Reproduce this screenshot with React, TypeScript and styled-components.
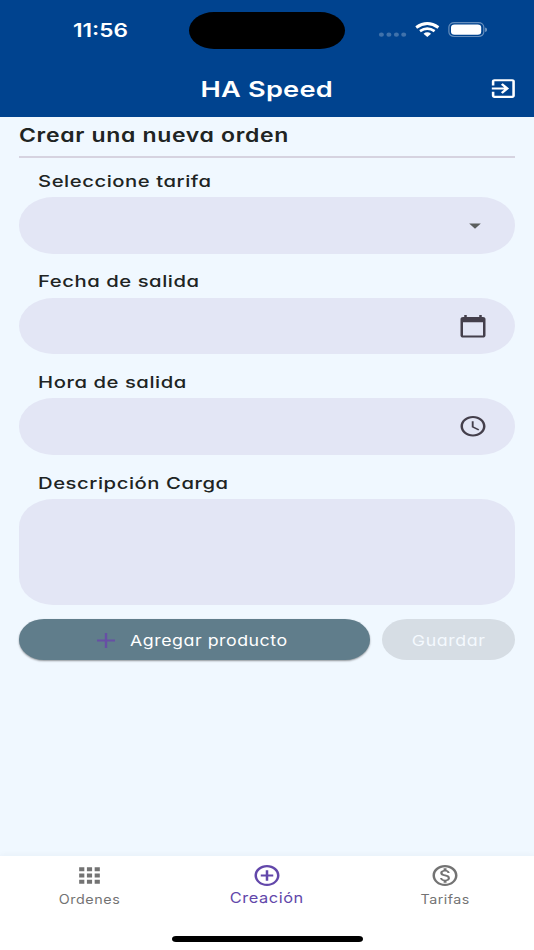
import React from 'react';
import styled, { createGlobalStyle } from 'styled-components';

const GlobalStyle = createGlobalStyle`
  * { box-sizing: border-box; }
  html, body { margin: 0; padding: 0; }
  body {
    font-family: Inter, "Open Sans", sans-serif;
    font-feature-settings: "cv11" 1;
    background: #f0f8ff;
  }
`;

const Screen = styled.div`
  width: 534px;
  height: 950px;
  display: flex;
  flex-direction: column;
  background: #f0f8ff;
  overflow: hidden;
`;

const Label = styled.span<{ $size: number; $stretch: number; $weight?: number; $spacing?: number; $origin?: string }>`
  display: block;
  white-space: nowrap;
  font-size: ${p => p.$size}px;
  font-weight: ${p => p.$weight ?? 400};
  letter-spacing: ${p => p.$spacing ?? 0}px;
  line-height: 24px;
  transform: scaleX(${p => p.$stretch});
  transform-origin: ${p => p.$origin ?? 'left'} center;
`;

const TopBar = styled.header`
  height: 117px;
  flex: none;
  background: #00438f;
  color: #fff;
`;

const StatusBar = styled.div`
  height: 60px;
  display: grid;
  grid-template-columns: 189px 156px 189px;
`;

const Clock = styled.div`
  padding: 18px 0 0 72.5px;
`;

const Island = styled.div`
  height: 37px;
  margin-top: 12px;
  background: #000;
  border-radius: 25px / 18.5px;
`;

const Indicators = styled.div`
  display: flex;
  padding: 21px 0 0 33px;
`;

const TitleBar = styled.div`
  height: 57px;
  display: grid;
  grid-template-columns: 60px 1fr 60px;
  align-items: center;
`;

const Title = styled.h1`
  margin: 0;
  display: flex;
  justify-content: center;
`;

const ExitButton = styled.button`
  border: 0;
  padding: 0 0 0 14px;
  background: none;
  color: #fff;
  display: flex;
`;

const Form = styled.main`
  flex: 1;
  padding: 0 19px;
  color: #202423;
`;

const Heading = styled.h2`
  margin: 0;
  height: 41px;
  padding-top: 7px;
  border-bottom: 2px solid #d6d3e0;
`;

const Field = styled.div<{ $gap: number }>`
  padding-top: ${p => p.$gap}px;
`;

const FieldLabel = styled.label`
  display: block;
  height: 28.5px;
  padding-left: 18.5px;
`;

const Input = styled.div<{ $height: number; $inset?: number; $ink?: string }>`
  height: ${p => p.$height}px;
  display: flex;
  align-items: center;
  justify-content: flex-end;
  padding-right: ${p => p.$inset ?? 27}px;
  border-radius: 34px / 28px;
  background: #e3e6f5;
  color: ${p => p.$ink ?? '#443f4b'};
`;

const Actions = styled.div`
  display: grid;
  grid-template-columns: 350.5px 133px;
  column-gap: 12.5px;
  margin-top: 14.5px;
`;

const Button = styled.button<{ $muted?: boolean }>`
  height: 40.5px;
  display: flex;
  align-items: center;
  justify-content: center;
  border: 0;
  padding: 2px 0 0;
  font-family: inherit;
  font-feature-settings: inherit;
  border-radius: 25px / 20.25px;
  color: ${p => (p.$muted ? '#f4f9fe' : '#fff')};
  background: ${p => (p.$muted ? '#d6dde4' : '#607d8b')};
  box-shadow: ${p => (p.$muted ? 'none' : '0 1px 2px rgba(0, 0, 0, 0.4)')};
`;

const AddContent = styled.span`
  display: flex;
  align-items: center;
  width: 194px;
  gap: 15px;
`;

const Nav = styled.nav`
  height: 94px;
  flex: none;
  background: #fff;
  display: grid;
  grid-template-columns: repeat(3, 1fr);
  grid-template-rows: 80px 6px;
  box-shadow: 0 -1px 6px rgba(0, 40, 80, 0.04);
`;

const Tab = styled.a<{ $active?: boolean }>`
  display: flex;
  flex-direction: column;
  align-items: center;
  padding-top: 7px;
  color: ${p => (p.$active ? '#6247aa' : '#737373')};
  font-feature-settings: "cv11" 0;
  & > span { margin-top: ${p => (p.$active ? -2 : 0)}px; }
`;

const HomeIndicator = styled.div`
  grid-column: 1 / -1;
  justify-self: center;
  width: 191px;
  height: 5.5px;
  border-radius: 4px / 3px;
  background: #000;
`;

const Icon = ({ w, h, d, box = '0 0 24 24' }: { w: number; h: number; d: string; box?: string }) => (
  <svg width={w} height={h} viewBox={box} preserveAspectRatio="none" fill="currentColor" aria-hidden>
    <path d={d} />
  </svg>
);

const paths = {
  exit: 'M10.09 15.59 11.5 17l5-5-5-5-1.41 1.41L12.67 11H3v2h9.67zM19 3H5c-1.11 0-2 .9-2 2v4h2V5h14v14H5v-4H3v4c0 1.1.89 2 2 2h14c1.1 0 2-.9 2-2V5c0-1.1-.9-2-2-2z',
  arrow: 'M7 10l5 5 5-5z',
  calendar: 'M20 3h-1V1h-2v2H7V1H5v2H4c-1.1 0-2 .9-2 2v16c0 1.1.9 2 2 2h16c1.1 0 2-.9 2-2V5c0-1.1-.9-2-2-2zm0 18H4V8h16v13z',
  clock: 'M11.99 2C6.47 2 2 6.48 2 12s4.47 10 9.99 10C17.52 22 22 17.52 22 12S17.52 2 11.99 2zM12 20c-4.42 0-8-3.58-8-8s3.58-8 8-8 8 3.58 8 8-3.58 8-8 8zm.5-13H11v6l5.25 3.15.75-1.23-4.5-2.67z',
  grid: 'M4 8h4V4H4zm6 12h4v-4h-4zm-6 0h4v-4H4zm0-6h4v-4H4zm6 0h4v-4h-4zm6-10v4h4V4zm-6 4h4V4h-4zm6 6h4v-4h-4zm0 6h4v-4h-4z',
  addCircle: 'M13 7h-2v4H7v2h4v4h2v-4h4v-2h-4zm-1-5C6.48 2 2 6.48 2 12s4.48 10 10 10 10-4.48 10-10S17.52 2 12 2zm0 18c-4.41 0-8-3.59-8-8s3.59-8 8-8 8 3.59 8 8-3.59 8-8 8z',
  money: 'M12 2C6.48 2 2 6.48 2 12s4.48 10 10 10 10-4.48 10-10S17.52 2 12 2zm0 18c-4.41 0-8-3.59-8-8s3.59-8 8-8 8 3.59 8 8-3.59 8-8 8zm.31-8.86c-1.77-.45-2.34-.94-2.34-1.67 0-.84.79-1.43 2.1-1.43 1.38 0 1.9.66 1.94 1.64h1.71c-.05-1.34-.87-2.57-2.49-2.97V5H10.9v1.69c-1.51.32-2.72 1.3-2.72 2.81 0 1.79 1.49 2.69 3.66 3.21 1.95.46 2.34 1.15 2.34 1.87 0 .53-.39 1.39-2.1 1.39-1.6 0-2.23-.72-2.32-1.64H8.04c.1 1.7 1.36 2.66 2.86 2.97V19h2.34v-1.67c1.52-.29 2.72-1.16 2.73-2.77-.01-2.2-1.9-2.96-3.66-3.42z',
};

const StatusIcons = () => (
  <svg width="112" height="18" viewBox="378 21 112 18" fill="#fff" aria-hidden>
    {[381.4, 388.9, 396.4, 403.7].map(x => (
      <ellipse key={x} cx={x} cy="34.7" rx="2.5" ry="2.1" opacity="0.25" />
    ))}
    <g fill="none" stroke="#fff">
      <path d="M416.2 27.4Q427.3 19.6 438.4 27.4" strokeWidth="3" />
      <path d="M420 31.1Q427.3 26 434.6 31.1" strokeWidth="2.7" />
    </g>
    <path d="M423.5 33.7Q427.3 30.9 431.1 33.7L427.3 36.9Z" />
    <rect x="448.9" y="22.6" width="34.9" height="13.9" rx="5.3" ry="4.4" fill="none" stroke="#fff" strokeOpacity="0.4" strokeWidth="1.2" />
    <rect x="451" y="24.5" width="30.2" height="10.3" rx="3.6" ry="3" />
    <path d="M485.2 27.5q1.8.5 1.8 2.2t-1.8 2.2z" opacity="0.5" />
  </svg>
);

const FieldText = ({ children }: { children: React.ReactNode }) => (
  <FieldLabel>
    <Label $size={16.4} $stretch={1.235} $weight={480} $spacing={0.45}>{children}</Label>
  </FieldLabel>
);

export default function App() {
  return (
    <>
      <GlobalStyle />
      <Screen>
        <TopBar>
          <StatusBar>
            <Clock><Label $size={18.5} $stretch={1.22} $weight={600}>11:56</Label></Clock>
            <Island />
            <Indicators><StatusIcons /></Indicators>
          </StatusBar>
          <TitleBar>
            <span />
            <Title><Label $size={22} $stretch={1.235} $weight={600} $spacing={0.2} $origin="center">HA Speed</Label></Title>
            <ExitButton aria-label="Salir"><Icon w={30.7} h={25} d={paths.exit} /></ExitButton>
          </TitleBar>
        </TopBar>
        <Form>
          <Heading><Label $size={18.7} $stretch={1.23} $weight={600} $spacing={0.55}>Crear una nueva orden</Label></Heading>
          <Field $gap={10.5}>
            <FieldText>Seleccione tarifa</FieldText>
            <Input $height={56.7} $inset={26} $ink="#5b5f5e"><Icon w={28} h={25} d={paths.arrow} /></Input>
          </Field>
          <Field $gap={15.5}>
            <FieldText>Fecha de salida</FieldText>
            <Input $height={56.7}><Icon w={30} h={24.5} d={paths.calendar} /></Input>
          </Field>
          <Field $gap={15.5}>
            <FieldText>Hora de salida</FieldText>
            <Input $height={56.7}><Icon w={30} h={24.5} d={paths.clock} /></Input>
          </Field>
          <Field $gap={15.5}>
            <FieldText>Descripción Carga</FieldText>
            <Input $height={105.8} />
          </Field>
          <Actions>
            <Button>
              <AddContent>
                <svg width="18" height="15" viewBox="0 0 18 15" stroke="#674fa5" fill="none" aria-hidden>
                  <path d="M0 7.5H18" strokeWidth="2" />
                  <path d="M9 0V15" strokeWidth="2.4" />
                </svg>
                <Label $size={14.8} $stretch={1.2} $spacing={0.45}>Agregar producto</Label>
              </AddContent>
            </Button>
            <Button $muted><Label $size={14.8} $stretch={1.2} $spacing={0.5} $origin="center">Guardar</Label></Button>
          </Actions>
        </Form>
        <Nav>
          <Tab><Icon w={31} h={25} d={paths.grid} /><Label $size={12.8} $stretch={1.12} $spacing={0.5} $origin="center">Ordenes</Label></Tab>
          <Tab $active><Icon w={30} h={25} d={paths.addCircle} /><Label $size={14.5} $stretch={1.13} $spacing={0.5} $origin="center">Creación</Label></Tab>
          <Tab><Icon w={30} h={25} d={paths.money} /><Label $size={12.8} $stretch={1.11} $spacing={0.45} $origin="center">Tarifas</Label></Tab>
          <HomeIndicator />
        </Nav>
      </Screen>
    </>
  );
}
